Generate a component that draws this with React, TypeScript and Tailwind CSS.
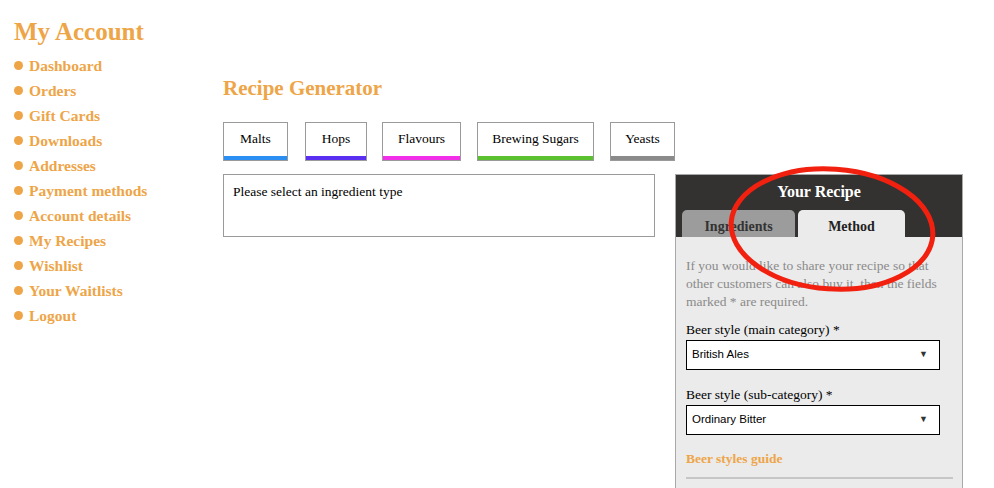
import React from 'react';

const orange = 'text-[#eea548]';

const navItems = [
  'Dashboard',
  'Orders',
  'Gift Cards',
  'Downloads',
  'Addresses',
  'Payment methods',
  'Account details',
  'My Recipes',
  'Wishlist',
  'Your Waitlists',
  'Logout',
];

const ingredientTabs = [
  { name: 'Malts', bar: 'bg-[#2b8ef2]', w: 'w-[65px]', ml: 'ml-0' },
  { name: 'Hops', bar: 'bg-[#5a2ff2]', w: 'w-[62px]', ml: 'ml-[17px]' },
  { name: 'Flavours', bar: 'bg-[#f22ee9]', w: 'w-[79px]', ml: 'ml-[15px]' },
  { name: 'Brewing Sugars', bar: 'bg-[#5cc12e]', w: 'w-[117px]', ml: 'ml-[16px]' },
  { name: 'Yeasts', bar: 'bg-[#8a8a8a]', w: 'w-[65px]', ml: 'ml-[16px]' },
];

const SelectBox: React.FC<{ value: string }> = ({ value }) => (
  <div className="flex items-center justify-between h-[30px] w-[254px] bg-white border border-black px-[5px] font-['Liberation_Sans',sans-serif] text-[11.5px] text-black">
    <span>{value}</span>
    <span className="text-[9px] text-[#333] mr-[6px]">▼</span>
  </div>
);

const App: React.FC = () => {
  return (
    <div className="relative w-[994px] h-[488px] overflow-hidden bg-white font-['Liberation_Serif',serif]">
      <div className="flex">
        {/* sidebar */}
        <aside className="w-[209px] shrink-0 pl-[14px] pt-[16px]">
          <h1 className={`text-[25px] font-bold leading-[32px] ${orange}`}>My Account</h1>
          <ul className="mt-[5px]">
            {navItems.map((item) => (
              <li key={item} className="flex items-center h-[25px]">
                <span className="w-[9px] h-[9px] rounded-full bg-[#eea548] mr-[6px]" />
                <span className={`text-[15.5px] font-bold ${orange}`}>{item}</span>
              </li>
            ))}
          </ul>
        </aside>

        {/* main */}
        <main className="pl-[14px] pt-[74px] flex-1">
          <h2 className={`text-[21px] font-bold leading-[28px] ${orange}`}>Recipe Generator</h2>
          <div className="flex mt-[20px]">
            {ingredientTabs.map((t) => (
              <div
                key={t.name}
                className={`${t.w} ${t.ml} h-[39px] border border-[#9a9a9a] flex flex-col bg-white`}
              >
                <div className="flex-1 flex items-center justify-center text-[13.5px] text-black">{t.name}</div>
                <div className={`h-[4px] ${t.bar}`} />
              </div>
            ))}
          </div>

          <div className="flex mt-[13px] gap-[20px]">
            <div className="w-[432px] h-[63px] border border-[#9a9a9a] px-[9px] pt-[7px] text-[13.5px] text-black self-start">
              Please select an ingredient type
            </div>

            {/* recipe panel */}
            <div className="w-[288px] h-[320px] border border-[#a8a8a8] bg-[#ebebeb] flex flex-col">
              <div className="bg-[#333230] h-[62px] flex flex-col">
                <div className="text-white text-[16px] font-bold text-center pt-[7px] leading-[20px]">Your Recipe</div>
                <div className="flex gap-[3px] pl-[6px] mt-[8px]">
                  <div className="w-[113px] h-[27px] rounded-t-[5px] bg-[#9c9c9c] flex items-end justify-center text-[14px] font-bold text-[#333] leading-[20px]">
                    Ingredients
                  </div>
                  <div className="w-[107px] h-[27px] rounded-t-[5px] bg-[#ebebeb] flex items-end justify-center text-[14px] font-bold text-[#222] leading-[20px]">
                    Method
                  </div>
                </div>
              </div>
              <div className="px-[10px] pt-[20px]">
                <p className="text-[13.5px] leading-[18px] text-[#8a8a8a]">
                  If you would like to share your recipe so that other customers can also buy it, then the fields marked * are required.
                </p>
                <div className="mt-[10px] text-[13.5px] text-black leading-[18px]">Beer style (main category) *</div>
                <div className="mt-[1px]">
                  <SelectBox value="British Ales" />
                </div>
                <div className="mt-[16px] text-[13.5px] text-black leading-[18px]">Beer style (sub-category) *</div>
                <div className="mt-[1px]">
                  <SelectBox value="Ordinary Bitter" />
                </div>
                <div className={`mt-[14px] text-[13.5px] font-bold ${orange}`}>Beer styles guide</div>
                <div className="mt-[8px] h-[2px] bg-[#c6c6c6] w-[267px]" />
              </div>
            </div>
          </div>
        </main>
      </div>

      {/* red annotation ellipse */}
      <svg className="absolute left-0 top-0 pointer-events-none" width="994" height="488">
        <ellipse
          cx="832"
          cy="229"
          rx="101"
          ry="60"
          transform="rotate(4 832 229)"
          fill="none"
          stroke="#f2200f"
          strokeWidth="5"
        />
      </svg>
    </div>
  );
};

export default App;
